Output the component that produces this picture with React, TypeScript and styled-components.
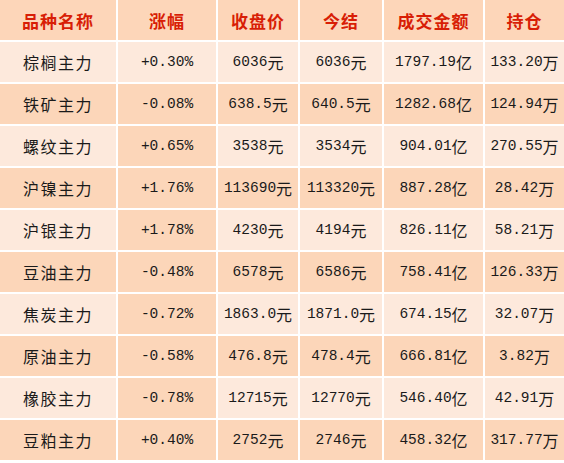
import React from "react";
import styled, { createGlobalStyle } from "styled-components";

const Global = createGlobalStyle`
  html, body { margin: 0; padding: 0; background: #ffffff; }
  body { font-family: "Noto Sans CJK SC", "Noto Sans", sans-serif; }
`;

const Table = styled.div`
  display: grid;
  grid-template-columns: 116px 98px 80px 82px 99px 79px;
  grid-auto-rows: 40px;
  column-gap: 2px;
  row-gap: 2px;
  width: 564px;
  background: #ffffff;
`;

const HeadCell = styled.div`
  display: flex;
  align-items: center;
  justify-content: center;
  background: #fdd6b9;
  color: #d81e06;
  font-weight: 700;
  font-size: 17px;
  letter-spacing: 1px;
`;

const Cell = styled.div<{ $dark: boolean }>`
  display: flex;
  align-items: center;
  justify-content: center;
  background: ${(p) => (p.$dark ? "#fcd6b9" : "#fde9dc")};
  color: #1a1a1a;
  white-space: nowrap;
`;

const NameCell = styled(Cell)`
  font-size: 16px;
  letter-spacing: 1.5px;
`;

const NumCell = styled(Cell)`
  font-family: "Liberation Mono", "Noto Sans CJK SC", monospace;
  font-size: 14.5px;
`;

const Unit = styled.span`
  font-family: "Noto Sans CJK SC", sans-serif;
  font-size: 16px;
`;

const headers = ["品种名称", "涨幅", "收盘价", "今结", "成交金额", "持仓"];

const rows: string[][] = [
  ["棕榈主力", "+0.30%", "6036元", "6036元", "1797.19亿", "133.20万"],
  ["铁矿主力", "-0.08%", "638.5元", "640.5元", "1282.68亿", "124.94万"],
  ["螺纹主力", "+0.65%", "3538元", "3534元", "904.01亿", "270.55万"],
  ["沪镍主力", "+1.76%", "113690元", "113320元", "887.28亿", "28.42万"],
  ["沪银主力", "+1.78%", "4230元", "4194元", "826.11亿", "58.21万"],
  ["豆油主力", "-0.48%", "6578元", "6586元", "758.41亿", "126.33万"],
  ["焦炭主力", "-0.72%", "1863.0元", "1871.0元", "674.15亿", "32.07万"],
  ["原油主力", "-0.58%", "476.8元", "478.4元", "666.81亿", "3.82万"],
  ["橡胶主力", "-0.78%", "12715元", "12770元", "546.40亿", "42.91万"],
  ["豆粕主力", "+0.40%", "2752元", "2746元", "458.32亿", "317.77万"],
];

function splitValue(v: string): [string, string] {
  const last = v.slice(-1);
  if (/[元亿万]/.test(last)) return [v.slice(0, -1), last];
  return [v, ""];
}

export default function App() {
  return (
    <>
      <Global />
      <Table>
        {headers.map((h) => (
          <HeadCell key={h}>{h}</HeadCell>
        ))}
        {rows.map((r, i) =>
          r.map((v, j) => {
            const dark = i % 2 === 1 || (j === 1 && i > 0);
            if (j === 0) {
              return (
                <NameCell key={`${i}-${j}`} $dark={dark}>
                  {v}
                </NameCell>
              );
            }
            const [num, unit] = splitValue(v);
            return (
              <NumCell key={`${i}-${j}`} $dark={dark}>
                {num}
                {unit && <Unit>{unit}</Unit>}
              </NumCell>
            );
          })
        )}
      </Table>
    </>
  );
}
